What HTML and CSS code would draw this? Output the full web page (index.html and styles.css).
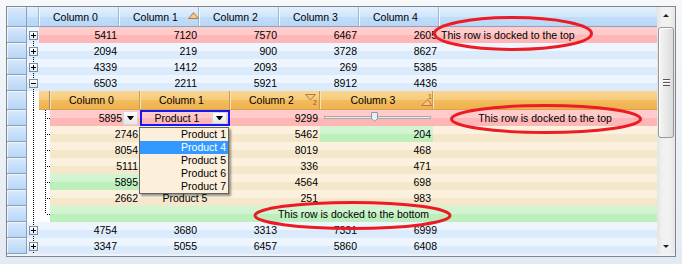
FILE: index.html
```html
<!DOCTYPE html>
<html lang="en">
<head>
  <meta charset="UTF-8">
  <title>Docked rows grid</title>
  <link rel="stylesheet" href="styles.css">
</head>
<body>
  <div class="window">
    <div class="grid">
      <div class="rows">
        <!-- main header -->
        <div class="row hdr">
          <div class="rh"></div>
          <div class="exp"></div>
          <div class="hc">Column 0</div>
          <div class="hc">Column 1
            <svg class="sort main-up" width="11" height="7" viewBox="0 0 11 7"><polygon points="0.5,6.5 5.5,0.5 10.5,6.5" /></svg>
          </div>
          <div class="hc">Column 2</div>
          <div class="hc">Column 3</div>
          <div class="hc">Column 4</div>
          <div class="hc rest"></div>
        </div>

        <div class="row">
          <div class="rh"></div>
          <div class="exp first"><span class="box plus"></span></div>
          <div class="cells pink">
            <div class="c">5411</div><div class="c">7120</div><div class="c">7570</div><div class="c">6467</div><div class="c">2605</div>
            <div class="rest note">This row is docked to the top</div>
          </div>
        </div>
        <div class="row">
          <div class="rh"></div>
          <div class="exp"><span class="box plus"></span></div>
          <div class="cells blue">
            <div class="c">2094</div><div class="c">219</div><div class="c">900</div><div class="c">3728</div><div class="c">8627</div>
            <div class="rest"></div>
          </div>
        </div>
        <div class="row">
          <div class="rh"></div>
          <div class="exp"><span class="box plus"></span></div>
          <div class="cells blue">
            <div class="c">4339</div><div class="c">1412</div><div class="c">2093</div><div class="c">269</div><div class="c">5385</div>
            <div class="rest"></div>
          </div>
        </div>
        <div class="row">
          <div class="rh"></div>
          <div class="exp"><span class="box minus"></span></div>
          <div class="cells blue">
            <div class="c">6503</div><div class="c">2211</div><div class="c">5921</div><div class="c">8912</div><div class="c">4436</div>
            <div class="rest"></div>
          </div>
        </div>

        <!-- child header -->
        <div class="row chdr">
          <div class="rh"></div>
          <div class="exp child"></div>
          <div class="ctree-hc"></div>
          <div class="oc">Column 0</div>
          <div class="oc">Column 1</div>
          <div class="oc">Column 2
            <svg class="sort child-down" width="11" height="7" viewBox="0 0 11 7"><polygon points="0.5,0.5 10.5,0.5 5.5,6" /></svg>
            <span class="sort-num num-2">2</span>
          </div>
          <div class="oc wide">Column 3
            <svg class="sort child-up" width="11" height="7" viewBox="0 0 11 7"><polygon points="0.5,6.5 7,0.5 10.5,6.5" /></svg>
            <span class="sort-num num-1">1</span>
          </div>
          <div class="oc rest"></div>
        </div>

        <div class="row">
          <div class="rh"></div>
          <div class="exp child"></div>
          <div class="ctree"></div>
          <div class="cells pink">
            <div class="cc combo"><span>5895</span><span class="cbtn"></span></div>
            <div class="cc"><div class="editor"><span class="etext">Product 1</span><span class="cbtn"></span></div></div>
            <div class="cc">9299</div>
            <div class="cc wide slider"><span class="track"></span>
              <svg class="thumb" width="7" height="10" viewBox="0 0 7 10"><polygon points="0.5,0.5 6.5,0.5 6.5,6.5 3.5,9.5 0.5,6.5" /></svg>
            </div>
            <div class="rest note center">This row is docked to the top</div>
          </div>
        </div>
        <!-- column 1 values of the next rows sit under the open list -->
        <div class="row">
          <div class="rh"></div>
          <div class="exp child"></div>
          <div class="ctree"></div>
          <div class="cells beige">
            <div class="cc">2746</div><div class="cc mid"></div><div class="cc">5462</div><div class="cc wide green">204</div>
            <div class="rest"></div>
          </div>
        </div>
        <div class="row">
          <div class="rh"></div>
          <div class="exp child"></div>
          <div class="ctree"></div>
          <div class="cells beige">
            <div class="cc">8054</div><div class="cc mid"></div><div class="cc">8019</div><div class="cc wide">468</div>
            <div class="rest"></div>
          </div>
        </div>
        <div class="row">
          <div class="rh"></div>
          <div class="exp child"></div>
          <div class="ctree"></div>
          <div class="cells beige">
            <div class="cc">5111</div><div class="cc mid"></div><div class="cc">336</div><div class="cc wide">471</div>
            <div class="rest"></div>
          </div>
        </div>
        <div class="row">
          <div class="rh"></div>
          <div class="exp child"></div>
          <div class="ctree"></div>
          <div class="cells beige">
            <div class="cc green">5895</div><div class="cc mid"></div><div class="cc">4564</div><div class="cc wide">698</div>
            <div class="rest"></div>
          </div>
        </div>
        <div class="row">
          <div class="rh"></div>
          <div class="exp child"></div>
          <div class="ctree"></div>
          <div class="cells beige">
            <div class="cc">2662</div><div class="cc mid">Product 5</div><div class="cc">251</div><div class="cc wide">983</div>
            <div class="rest"></div>
          </div>
        </div>
        <div class="row">
          <div class="rh"></div>
          <div class="exp child"></div>
          <div class="ctree last"></div>
          <div class="cells green-row">
            <div class="note center full">This row is docked to the bottom</div>
          </div>
        </div>

        <div class="row">
          <div class="rh"></div>
          <div class="exp"><span class="box plus"></span></div>
          <div class="cells blue">
            <div class="c">4754</div><div class="c">3680</div><div class="c">3313</div><div class="c">7331</div><div class="c">6999</div>
            <div class="rest"></div>
          </div>
        </div>
        <div class="row">
          <div class="rh"></div>
          <div class="exp"><span class="box plus"></span></div>
          <div class="cells blue">
            <div class="c">3347</div><div class="c">5055</div><div class="c">6457</div><div class="c">5860</div><div class="c">6408</div>
            <div class="rest"></div>
          </div>
        </div>
      </div>

      <div class="vscroll">
        <div class="sb-btn"><span class="arrow up"></span></div>
        <div class="sb-track"><div class="thumb-v"><span class="grip"></span></div></div>
        <div class="sb-btn"><span class="arrow down"></span></div>
      </div>
    </div>

    <div class="dropdown">
      <div>Product 1</div>
      <div class="sel">Product 4</div>
      <div>Product 5</div>
      <div>Product 6</div>
      <div>Product 7</div>
    </div>

    <svg class="marks" width="682" height="264" viewBox="0 0 682 264">
      <ellipse cx="513" cy="33.5" rx="78.5" ry="16" />
      <ellipse cx="546" cy="119" rx="94.5" ry="13.5" />
      <ellipse cx="352.5" cy="215.5" rx="97.5" ry="13" />
    </svg>
  </div>
</body>
</html>
```

FILE: styles.css
```css
* {
  box-sizing: border-box;
}

html, body {
  margin: 0;
  padding: 0;
}

body {
  width: 682px;
  height: 264px;
  overflow: hidden;
  background: linear-gradient(to bottom, #f6f8fa, #e3ebf2);
  font-family: 'Liberation Sans', Arial, sans-serif;
  font-size: 10.5px;
  color: #000;
}

.window {
  position: relative;
  width: 682px;
  height: 264px;
  padding: 6px 0 0 6px;
}

.grid {
  display: flex;
  width: 670px;
  height: 251px;
  border: 1px solid #80868e;
  background: #eef4fa;
}

.rows {
  width: 650px;
  display: flex;
  flex-direction: column;
}

.row {
  display: flex;
  height: 16px;
  line-height: 16px;
  flex: none;
}

.row.hdr {
  height: 20px;
  line-height: 20px;
}

.row.chdr {
  height: 19px;
  line-height: 19px;
}

/* row header column */
.rh {
  width: 20px;
  flex: none;
  background: linear-gradient(to bottom, #d8e9fc, #b7d6f7);
  border-right: 1px solid #8d9fb3;
  border-bottom: 1px solid #8d9fb3;
  box-shadow: inset 1px 1px 0 #eef6ff;
}

/* expander column */
.exp {
  width: 12px;
  flex: none;
  position: relative;
  background: linear-gradient(to bottom, #eef6fe 0 50%, #e0edfb 50% 100%);
}

.exp::before {
  content: "";
  position: absolute;
  left: 6px;
  top: 0;
  bottom: 0;
  width: 1px;
  background: repeating-linear-gradient(to bottom, #000 0 1px, transparent 1px 2px);
}

.exp.first::before {
  top: 8px;
}

.exp.child {
  background: #fff;
}

.hdr .exp {
  background: linear-gradient(to bottom, #e3f0fd 0, #d0e6fb 50%, #c1ddf9 51%, #b8d7f7 100%);
  border-right: 1px solid #9cb6d0;
  border-bottom: 1px solid #8aa3bb;
}

.hdr .exp::before {
  display: none;
}

.box {
  position: absolute;
  left: 2px;
  top: 4px;
  width: 9px;
  height: 9px;
  border: 1px solid #7a8ea4;
  background: linear-gradient(to bottom, #ffffff, #dfe6ee);
  z-index: 1;
}

.box::before {
  content: "";
  position: absolute;
  left: 1px;
  top: 3px;
  width: 5px;
  height: 1px;
  background: #000;
}

.box.plus::after {
  content: "";
  position: absolute;
  left: 3px;
  top: 1px;
  width: 1px;
  height: 5px;
  background: #000;
}

/* header cells */
.hc {
  position: relative;
  width: 80px;
  flex: none;
  text-align: center;
  padding-right: 6px;
  background: linear-gradient(to bottom, #e3f0fd 0, #d0e6fb 50%, #c1ddf9 51%, #b8d7f7 100%);
  border-right: 1px solid #9cb6d0;
  border-bottom: 1px solid #8aa3bb;
  box-shadow: inset 1px 0 0 #f3f9ff;
}

.hc.rest {
  flex: 1;
  border-right: none;
}

.oc {
  position: relative;
  width: 90px;
  flex: none;
  text-align: center;
  padding-right: 6px;
  background: linear-gradient(to bottom, #f9d693 0, #f6ca78 50%, #f2bc5d 51%, #efb24f 100%);
  border-right: 1px solid #c99a55;
  border-bottom: 1px solid #dca14a;
  box-shadow: inset 1px 0 0 #fbe3b6;
}

.oc.wide {
  width: 113px;
}

.oc.rest {
  flex: 1;
  border-right: none;
}

.ctree-hc {
  width: 11px;
  flex: none;
  background: linear-gradient(to bottom, #f9d693 0, #f6ca78 50%, #f2bc5d 51%, #efb24f 100%);
  border-right: 1px solid #a08a6a;
  border-bottom: 1px solid #dca14a;
}

.sort {
  position: absolute;
}

.sort polygon {
  fill: #f6c48c;
  stroke: #b97a3a;
  stroke-width: 1;
}

.main-up {
  left: 69px;
  top: 5px;
}

.child-down {
  left: 75px;
  top: 3px;
}

.child-up {
  left: 101px;
  top: 8px;
}

.sort-num {
  position: absolute;
  font-size: 7px;
  line-height: 7px;
  color: #9a5a20;
}

.num-2 {
  left: 83px;
  top: 8px;
}

.num-1 {
  left: 108px;
  top: 2px;
}

/* data cells */
.cells {
  flex: 1;
  display: flex;
}

.cells.blue {
  background: linear-gradient(to bottom, #edf6fe 0 50%, #dcebfb 50% 100%);
}

.cells.pink {
  background: linear-gradient(to bottom, #ffcbcb 0 50%, #ffb6b6 50% 100%);
}

.cells.beige {
  background: linear-gradient(to bottom, #fcf1dc 0 50%, #f5e7cb 50% 100%);
}

.cells.green-row,
.green {
  background: linear-gradient(to bottom, #d0f5d0 0 50%, #bcefbc 50% 100%);
}

.c {
  width: 80px;
  flex: none;
  text-align: right;
  padding-right: 2px;
}

.cc {
  width: 90px;
  flex: none;
  text-align: right;
  padding-right: 2px;
}

.cc.wide {
  width: 113px;
}

.cc.mid {
  text-align: center;
  padding-right: 0;
}

.rest {
  flex: 1;
}

.note {
  padding-left: 2px;
  white-space: nowrap;
}

.note.center {
  text-align: center;
  padding-left: 0;
}

.note.full {
  flex: 1;
}

/* tree lines in the child band */
.ctree {
  width: 11px;
  flex: none;
  position: relative;
  background: #fff;
}

.ctree::before {
  content: "";
  position: absolute;
  left: 6px;
  top: 0;
  bottom: 0;
  width: 1px;
  background: repeating-linear-gradient(to bottom, #000 0 1px, transparent 1px 2px);
}

.ctree.last::before {
  bottom: 8px;
}

.ctree::after {
  content: "";
  position: absolute;
  left: 7px;
  top: 8px;
  width: 4px;
  height: 1px;
  background: repeating-linear-gradient(to right, transparent 0 1px, #000 1px 2px);
}

/* combo editors */
.cc.combo {
  display: flex;
  justify-content: flex-end;
  align-items: center;
  gap: 1px;
}

.cbtn {
  position: relative;
  width: 15px;
  height: 14px;
  flex: none;
  background: linear-gradient(to bottom, #ffffff, #e6e6e6);
  border: 1px solid #d6d6d6;
}

.cbtn::after {
  content: "";
  position: absolute;
  left: 3px;
  top: 4px;
  width: 1px;
  border-left: 3px solid transparent;
  border-right: 3px solid transparent;
  border-top: 4px solid #000;
}

.cc:has(.editor) {
  padding: 0;
}

.editor {
  display: flex;
  align-items: center;
  width: 90px;
  height: 16px;
  border: 2px solid #1616f4;
  padding-right: 1px;
}

.etext {
  flex: 1;
  text-align: center;
  line-height: 12px;
}

.editor .cbtn {
  height: 12px;
}

.editor .cbtn::after {
  top: 3px;
}

/* slider */
.slider {
  position: relative;
}

.track {
  position: absolute;
  left: 4px;
  right: 2px;
  top: 6px;
  height: 3px;
  border: 1px solid #a9a9a9;
  background: #e8ebec;
}

.thumb {
  position: absolute;
  left: 51px;
  top: 2px;
}

.thumb polygon {
  fill: #e9eef4;
  stroke: #8e9aa8;
  stroke-width: 1;
}

/* scrollbar */
.vscroll {
  width: 18px;
  flex: none;
  height: 247px;
  display: flex;
  flex-direction: column;
  background: linear-gradient(to right, #e4e4e4, #f1f1f1 30%, #f1f1f1 70%, #e6e6e6);
}

.sb-btn {
  position: relative;
  height: 17px;
  flex: none;
}

.arrow {
  position: absolute;
  left: 6px;
  width: 1px;
  border-left: 3px solid transparent;
  border-right: 3px solid transparent;
}

.arrow.up {
  top: 7px;
  border-bottom: 3px solid #222;
}

.arrow.down {
  top: 8px;
  border-top: 3px solid #222;
}

.sb-track {
  flex: 1;
  padding: 3px 1px 0 1px;
}

.thumb-v {
  position: relative;
  height: 111px;
  border: 1px solid #979797;
  border-radius: 3px;
  background: linear-gradient(to right, #f5f5f5, #e9e9e9 50%, #dadada);
  box-shadow: inset 1px 1px 0 #fff;
}

.grip {
  position: absolute;
  left: 4px;
  top: 51px;
  width: 7px;
  height: 7px;
  background: repeating-linear-gradient(to bottom, #555 0 1px, #fff 1px 2px, transparent 2px 3px);
}

/* open drop-down list */
.dropdown {
  position: absolute;
  left: 139px;
  top: 127px;
  width: 90px;
  border: 1px solid #646464;
  background: #fcf0dc;
  box-shadow: 2px 2px 2px rgba(0, 0, 0, 0.4);
  z-index: 5;
}

.dropdown div {
  height: 13px;
  line-height: 13px;
  text-align: right;
  padding-right: 2px;
}

.dropdown .sel {
  background: #3399ff;
  color: #fff;
}

/* red annotation marks */
.marks {
  position: absolute;
  left: 0;
  top: 0;
  pointer-events: none;
  z-index: 10;
}

.marks ellipse {
  fill: none;
  stroke: #ec1c24;
  stroke-width: 3;
}
```
